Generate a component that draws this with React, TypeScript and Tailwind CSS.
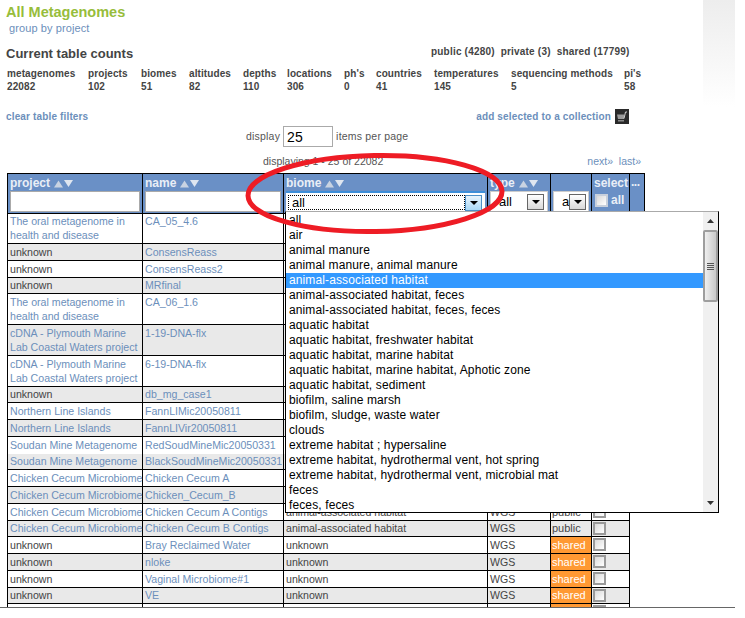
import React from "react";

const biomes = ["all","air","animal manure","animal manure, animal manure","animal-associated habitat","animal-associated habitat, feces","animal-associated habitat, feces, feces","aquatic habitat","aquatic habitat, freshwater habitat","aquatic habitat, marine habitat","aquatic habitat, marine habitat, Aphotic zone","aquatic habitat, sediment","biofilm, saline marsh","biofilm, sludge, waste water","clouds","extreme habitat ; hypersaline","extreme habitat, hydrothermal vent, hot spring","extreme habitat, hydrothermal vent, microbial mat","feces","feces, feces"];

const counts: [string, string, string][] = [
  ["metagenomes","22082","w-[81px]"],["projects","102","w-[53px]"],["biomes","51","w-[48px]"],["altitudes","82","w-[54px]"],["depths","110","w-[44px]"],["locations","306","w-[57px]"],["ph's","0","w-[32px]"],["countries","41","w-[58px]"],["temperatures","145","w-[77px]"],["sequencing methods","5","w-[113px]"],["pi's","58","w-[20px]"],
];

type Row = { p: React.ReactNode; n: string; h: string; plink?: boolean; b?: string; a?: string; nb?: boolean; blank?: boolean };
const aa = "animal-associated habitat";
const oral = <>The oral metagenome in<br />health and disease</>;
const cdna = <>cDNA - Plymouth Marine<br />Lab Coastal Waters project</>;
const rows: Row[] = [
  { p: oral, n: "CA_05_4.6", h: "h-[30px]", plink: true },
  { p: "unknown", n: "ConsensReass", h: "h-[17px]" },
  { p: "unknown", n: "ConsensReass2", h: "h-[17px]" },
  { p: "unknown", n: "MRfinal", h: "h-[16px]" },
  { p: oral, n: "CA_06_1.6", h: "h-[31px]", plink: true },
  { p: cdna, n: "1-19-DNA-flx", h: "h-[31px]", plink: true },
  { p: cdna, n: "6-19-DNA-flx", h: "h-[31px]", plink: true },
  { p: "unknown", n: "db_mg_case1", h: "h-[16px]" },
  { p: "Northern Line Islands", n: "FannLIMic20050811", h: "h-[17px]", plink: true },
  { p: "Northern Line Islands", n: "FannLIVir20050811", h: "h-[17px]", plink: true },
  { p: "Soudan Mine Metagenome", n: "RedSoudMineMic20050331", h: "h-[17px]", plink: true, nb: true },
  { p: "Soudan Mine Metagenome", n: "BlackSoudMineMic20050331", h: "h-[16px]", plink: true },
  { p: "Chicken Cecum Microbiome", n: "Chicken Cecum A", h: "h-[17px]", plink: true },
  { p: "Chicken Cecum Microbiome", n: "Chicken_Cecum_B", h: "h-[17px]", plink: true },
  { p: "Chicken Cecum Microbiome", n: "Chicken Cecum A Contigs", h: "h-[17px]", plink: true, b: aa, a: "public" },
  { p: "Chicken Cecum Microbiome", n: "Chicken Cecum B Contigs", h: "h-[16px]", plink: true, b: aa, a: "public" },
  { p: "unknown", n: "Bray Reclaimed Water", h: "h-[17px]", b: "unknown", a: "shared" },
  { p: "unknown", n: "nloke", h: "h-[17px]", b: "unknown", a: "shared" },
  { p: "unknown", n: "Vaginal Microbiome#1", h: "h-[17px]", b: "unknown", a: "shared" },
  { p: "unknown", n: "VE", h: "h-[16px]", b: "unknown", a: "shared" },
  { p: "", n: "", h: "h-[17px]", a: "shared", blank: true },
];

function Sort() {
  return (
    <svg width="22" height="9" viewBox="0 0 22 9" className="inline-block ml-[3px] align-[-1px]">
      <path d="M1 8.5 L5.5 1.5 L10 8.5 Z" fill="#c9d3e2" />
      <path d="M11 1 L20 1 L15.5 8 Z" fill="#dfe6f0" />
    </svg>
  );
}

function Check({ light }: { light?: boolean }) {
  return (
    <span className={`inline-block w-[13px] h-[13px] border-2 bg-gradient-to-br from-[#d9d9d9] to-white ${light ? "border-[#c8d0dc]" : "border-[#9a9a9a]"}`} />
  );
}

function Arrow({ blue }: { blue?: boolean }) {
  return (
    <span className={`flex items-center justify-center shrink-0 w-[17px] h-[16px] border ${blue ? "border-[#4d90c8] bg-gradient-to-b from-[#e8f4fc] to-[#a9d8f6]" : "border-[#666] bg-gradient-to-b from-white to-[#d8d8d8]"}`}>
      <svg width="8" height="4" viewBox="0 0 8 4"><path d="M0 0 H8 L4 4 Z" fill="#000" /></svg>
    </span>
  );
}

export default function App() {
  return (
    <div className="relative w-[735px] h-[608px] overflow-hidden bg-white border-b border-[#666] font-['Liberation_Sans',Arial,sans-serif] text-[#444]">
      <div className="absolute right-0 top-0 w-[32px] h-[107px] bg-gradient-to-b from-[#ededed] to-white" />

      <div className="pl-[6px] pt-[3px] text-[14.5px] leading-[18px] font-bold text-[#97bd3b]">All Metagenomes</div>
      <div className="pl-[9px] text-[11px] leading-[13px] mt-[1px] tracking-[0.1px] text-[#6c8fbb]">group by project</div>

      <div className="flex mt-[10px] pl-[6px] h-[18px] items-center relative">
        <div className="text-[13px] font-bold text-[#444] w-[425px]">Current table counts</div>
        <div className="text-[10px] font-bold tracking-[0.2px] text-[#444] -mt-[5px] whitespace-pre">public (4280)  private (3)  shared (17799)</div>
      </div>

      <div className="flex pl-[7px] mt-[4px] text-[10px] leading-[13px] font-bold tracking-[0.1px] text-[#444]">
        {counts.map(([l, v, w]) => (
          <div key={l} className={`${w} whitespace-nowrap`}><div>{l}</div><div>{v}</div></div>
        ))}
      </div>

      <div className="flex items-center justify-between pl-[6px] w-[629px] mt-[16px] h-[15px] text-[10px] font-bold tracking-[0.15px] text-[#6c8fbb]">
        <span>clear table filters</span>
        <span className="flex items-center gap-[4px]">
          add selected to a collection
          <span className="flex items-center justify-center w-[14px] h-[15px] bg-[#2a2a2a]">
            <svg width="12" height="12" viewBox="0 0 12 12">
              <path d="M1 3.5 H8 V8 H2 Z" fill="#9a9a9a" />
              <path d="M8 7.5 L9.5 1 H11" stroke="#cfcfcf" fill="none" />
              <rect x="2" y="9" width="6" height="1.5" fill="#8a8a8a" />
            </svg>
          </span>
        </span>
      </div>

      <div className="flex items-center pl-[246px] mt-[2px] h-[21px] text-[10.5px] tracking-[0.2px] text-[#555]">
        <span>display</span>
        <span className="mx-[3px] w-[50px] h-[21px] border border-[#aaa] pl-[3px] text-[14px] leading-[20px] tracking-normal text-black">25</span>
        <span>items per page</span>
      </div>

      <div className="flex justify-between w-[641px] pl-[263px] mt-[7px] h-[14px] text-[10.5px] leading-[14px] text-[#555]">
        <span>displaying 1 - 25 of 22082</span>
        <span className="text-[#6c8fbb] whitespace-pre">next»  last»</span>
      </div>

      <table className="table-fixed border-collapse ml-[7px] mt-[5px] w-[637px] text-[10.6px] leading-[14px] text-[#444]">
        <colgroup>
          <col className="w-[135px]" /><col className="w-[141px]" /><col className="w-[204px]" /><col className="w-[63px]" /><col className="w-[41px]" /><col className="w-[38px]" /><col className="w-[15px]" />
        </colgroup>
        <thead>
          <tr className="bg-[#6a90c6] text-[#e9eef6] font-bold text-[12px]">
            <td className="border border-black h-[40px] px-[2px] align-top pt-[2px]">
              project<Sort />
              <div className="mt-[1px] h-[21px] bg-white border border-[#aaa]" />
            </td>
            <td className="border border-black px-[2px] align-top pt-[2px]">
              name<Sort />
              <div className="mt-[1px] h-[21px] bg-white border border-[#aaa]" />
            </td>
            <td className="border border-black px-[2px] align-top pt-[2px]">
              biome<Sort />
              <div className="mt-[1px] h-[21px] bg-white border-t-2 border-[#3f8fd8] flex items-center pl-[2px] pr-[3px] font-normal text-black">
                <div className="flex-1 h-[15px] border border-dotted border-black text-[13px] leading-[14px] pl-[3px]">all</div>
                <Arrow blue />
              </div>
            </td>
            <td className="border border-black px-[2px] align-top pt-[2px]">
              type<Sort />
              <div className="mt-[1px] h-[21px] bg-white border border-[#ccc] flex items-center justify-between pl-[8px] pr-[3px] font-normal text-black text-[13px]">
                all<Arrow />
              </div>
            </td>
            <td className="border border-black px-[2px] align-top pt-[2px]">
              <div className="h-[14px]" />
              <div className="mt-[1px] h-[21px] bg-white border border-[#ccc] flex items-center justify-between pl-[8px] pr-[3px] font-normal text-black text-[13px] overflow-hidden">
                a<Arrow />
              </div>
            </td>
            <td className="border border-black px-[2px] align-top pt-[2px] whitespace-nowrap">
              select
              <div className="mt-[3px] flex items-center gap-[3px] pl-[1px]"><Check light />all</div>
            </td>
            <td className="border border-black align-top pt-[1px] px-[1px] tracking-[-0.5px]">...</td>
          </tr>
        </thead>
        <tbody>
          {rows.map((r, i) => {
            const shaded = i % 2 === 1;
            const prevNb = i > 0 && rows[i - 1].nb;
            const hb = `${r.nb ? "border-b-0" : "border-b"} ${prevNb ? "border-t-0" : "border-t"} border-x border-black`;
            const pt = r.h === "h-[17px]" || r.h === "h-[31px]" ? "pt-[1px]" : "pt-0";
            return (
              <tr key={i} className={shaded ? "bg-[#e9e9e9]" : "bg-white"}>
                <td className={`${hb} ${r.h} px-[2px] pb-0 ${pt} align-top whitespace-nowrap ${r.plink ? "text-[#6c8fbb]" : ""}`}>{r.p}</td>
                <td className={`${hb} px-[2px] pb-0 ${pt} align-top text-[#6c8fbb] whitespace-nowrap`}>{r.n}</td>
                <td className={`${hb} px-[2px] pb-0 ${pt} align-top whitespace-nowrap`}>{r.b}</td>
                <td className={`${hb} px-[2px] pb-0 ${pt} align-top`}>{r.b ? "WGS" : ""}</td>
                <td className={`${hb} p-0 align-top ${r.a === "shared" ? "bg-[#ff9933] text-white" : ""}`}>
                  <div className={`pl-[1px] text-[11px] ${pt}`}>{r.blank ? "" : r.a}</div>
                </td>
                <td className={`${hb} px-[1px] py-0 align-top`}>
                  {r.a ? <div className="pt-[1px] leading-[0]"><Check /></div> : null}
                </td>
              </tr>
            );
          })}
        </tbody>
      </table>

      {/* open dropdown */}
      <div className="absolute left-[285px] top-[211px] w-[434px] h-[302px] flex bg-white border-t border-t-[#aaa] border-x border-x-black border-b border-b-black">
        <div className="flex-1 pt-[1px] text-[12px] leading-[15px] tracking-[0.12px] text-black">
          {biomes.map((b, i) => (
            <div key={i} className={`h-[15px] pl-[3px] ${i === 4 ? "bg-[#3399ff] text-white" : ""}`}>{b}</div>
          ))}
        </div>
        <div className="w-[15px] bg-[#f0f0f0] flex flex-col">
          <div className="h-[18px] flex items-center justify-center">
            <svg width="7" height="4" viewBox="0 0 7 4"><path d="M0 4 L3.5 0 L7 4 Z" fill="#333" /></svg>
          </div>
          <div className="h-[72px] border-2 border-[#9e9e9e] rounded-[2px] bg-gradient-to-r from-[#efefef] via-[#dcdcdc] to-[#c9c9c9] flex items-center justify-center">
            <div className="w-[7px] flex flex-col gap-[1px]">
              <span className="h-[1px] bg-[#555]" /><span className="h-[1px] bg-[#555]" /><span className="h-[1px] bg-[#555]" /><span className="h-[1px] bg-[#555]" />
            </div>
          </div>
          <div className="flex-1" />
          <div className="h-[18px] flex items-center justify-center">
            <svg width="7" height="4" viewBox="0 0 7 4"><path d="M0 0 L3.5 4 L7 0 Z" fill="#333" /></svg>
          </div>
        </div>
      </div>

      {/* hand-drawn red ellipse */}
      <svg className="absolute left-[240px] top-[148px] pointer-events-none" width="270" height="92" viewBox="0 0 270 92">
        <ellipse cx="135" cy="45.5" rx="127" ry="38" transform="rotate(-1 135 45)" fill="none" stroke="#ee1c25" strokeWidth="5" />
      </svg>
    </div>
  );
}
